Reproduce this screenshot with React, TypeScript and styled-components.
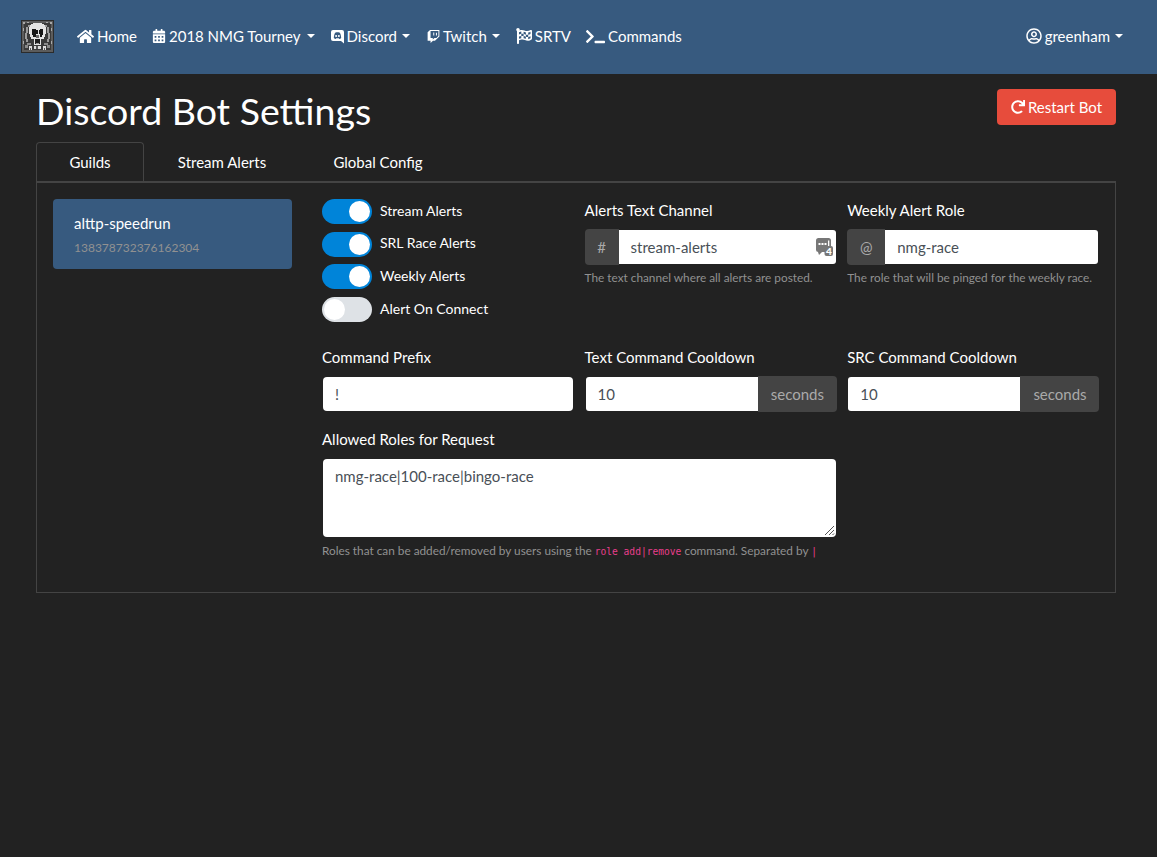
import styled, { createGlobalStyle } from "styled-components";
import {
  FaCalendarAlt,
  FaFlagCheckered,
  FaHome,
  FaRedo,
  FaRegUserCircle,
  FaTerminal,
  FaTwitch,
} from "react-icons/fa";

const GlobalStyle = createGlobalStyle`
  * { box-sizing: border-box; }
  html, body { margin: 0; background: #222; }
  body {
    font-family: Lato, "Liberation Sans", sans-serif;
    font-size: 15px;
    line-height: 1.5;
    color: #fff;
    min-height: 857px;
  }
`;

const Navbar = styled.nav`
  height: 74px;
  padding: 0 21px 2px;
  display: flex;
  align-items: center;
  background: #375a7f;
`;

const Brand = styled.div`
  width: 33px;
  height: 33px;
  margin-right: 23px;
  display: flex;
`;

const NavItem = styled.a<{ $gap?: number }>`
  display: flex;
  align-items: center;
  gap: 3px;
  margin-right: ${(p) => p.$gap ?? 16}px;
  color: #fff;
  white-space: nowrap;
  svg { flex: none; }
`;

const Caret = styled.span<{ $left?: number }>`
  width: 0;
  height: 0;
  margin-left: ${(p) => p.$left ?? 0}px;
  border-top: 4.5px solid #fff;
  border-left: 4.5px solid transparent;
  border-right: 4.5px solid transparent;
`;

const NavSpacer = styled.div`
  flex: 1;
`;

const Page = styled.main`
  padding: 0 41px 0 36px;
`;

const Header = styled.header`
  display: flex;
  justify-content: space-between;
  align-items: flex-start;
  height: 68px;
`;

const Title = styled.h1`
  margin: 13px 0 0;
  font-size: 37.5px;
  font-weight: 400;
  line-height: 48px;
`;

const RestartButton = styled.button`
  margin-top: 15px;
  width: 119px;
  height: 36px;
  display: flex;
  align-items: center;
  justify-content: center;
  gap: 3px;
  border: 0;
  border-radius: 4px;
  background: #e74c3c;
  color: #fff;
  font: inherit;
`;

const Tabs = styled.div`
  display: flex;
  height: 41px;
  border-bottom: 2px solid #444;
`;

const Tab = styled.div<{ $active?: boolean; $width: number }>`
  width: ${(p) => p.$width}px;
  height: 39px;
  display: flex;
  align-items: center;
  justify-content: center;
  border: 1px solid ${(p) => (p.$active ? "#444" : "transparent")};
  border-bottom: 0;
  border-radius: 4px 4px 0 0;
`;

const Panel = styled.section`
  height: 410px;
  padding: 16px;
  display: flex;
  gap: 30px;
  border: 1px solid #444;
  border-top: 0;
`;

const GuildCard = styled.div`
  width: 239px;
  height: 70px;
  flex: none;
  padding: 12px 21px;
  background: #375a7f;
  border-radius: 4px;
`;

const GuildName = styled.div`
  line-height: 24px;
`;

const GuildId = styled.div`
  margin-top: 2px;
  font-size: 12px;
  line-height: 22px;
  color: #919191;
`;

const Settings = styled.div`
  width: 778px;
  display: grid;
  grid-template-columns: repeat(3, 252.3px);
  grid-template-rows: 147px 82px auto;
  column-gap: 10.3px;
`;

const SwitchList = styled.div`
  display: flex;
  flex-direction: column;
  gap: 7.5px;
`;

const SwitchRow = styled.div`
  display: flex;
  align-items: center;
  gap: 8px;
  height: 25.2px;
  font-size: 14px;
`;

const SwitchLabel = styled.span`
  margin-top: -3px;
`;

const SwitchTrack = styled.span<{ $on?: boolean }>`
  width: 50px;
  height: 25px;
  padding: 2px;
  display: flex;
  justify-content: ${(p) => (p.$on ? "flex-end" : "flex-start")};
  border-radius: 13px;
  background: ${(p) => (p.$on ? "#0084d9" : "#dee2e6")};
`;

const SwitchKnob = styled.span`
  width: 21px;
  height: 21px;
  border-radius: 50%;
  background: #fff;
`;

const Field = styled.div<{ $span?: number }>`
  grid-column: span ${(p) => p.$span ?? 1};
`;

const Label = styled.label`
  display: block;
  height: 30px;
  line-height: 22px;
`;

const InputGroup = styled.div`
  display: flex;
  height: 36px;
  border-radius: 4px;
  overflow: hidden;
`;

const Addon = styled.span<{ $width: number }>`
  width: ${(p) => p.$width}px;
  flex: none;
  display: flex;
  align-items: center;
  justify-content: center;
  background: #444;
  color: #aaa;
`;

const InputBox = styled.div<{ $addonRight?: boolean }>`
  position: relative;
  flex: 1;
  min-width: 0;
  margin: ${(p) => (p.$addonRight ? "1px 0 1px 1px" : "1px 1px 1px 0")};
  padding: 0 12px;
  display: flex;
  align-items: center;
  background: #fff;
  color: #495057;
  border-radius: ${(p) => (p.$addonRight ? "3px 0 0 3px" : "0 3px 3px 0")};
`;

const SingleInput = styled.div`
  height: 34px;
  margin: 1px;
  padding: 0 12px;
  display: flex;
  align-items: center;
  background: #fff;
  color: #495057;
  border-radius: 4px;
`;

const ManagerIcon = styled.span`
  position: absolute;
  top: 8px;
  right: 3px;
  display: flex;
`;

const Help = styled.div`
  margin-top: 4px;
  font-size: 11.8px;
  line-height: 17px;
  color: #919191;
  white-space: nowrap;
`;

const TextArea = styled.div`
  position: relative;
  height: 78px;
  margin: 1px 1px 5px;
  padding: 5px 12px;
  background: #fff;
  border-radius: 4px;
  color: #495057;
  line-height: 24px;
`;

const Grip = styled.svg`
  position: absolute;
  right: 1px;
  bottom: 1px;
`;

const Code = styled.code`
  font-family: "DejaVu Sans Mono", "Liberation Mono", monospace;
  font-size: 9.6px;
  color: #e83e8c;
`;

function SkullLogo() {
  return (
    <svg width="33" height="33" viewBox="0 0 32 32" shapeRendering="crispEdges">
      <rect width="32" height="32" fill="#2b2b2b" />
      <rect x="1" y="1" width="30" height="30" fill="#5c5c5c" />
      <rect x="3" y="3" width="26" height="26" fill="#3a3a3a" />
      {/* web and legs */}
      <path d="M2 2h2v2H2zM6 2h2v1H6zM24 2h2v1h-2zM28 2h2v2h-2zM2 8h1v3H2zM29 8h1v3h-1zM2 20h1v3H2zM29 20h1v3h-1z" fill="#a8a8a8" />
      <path d="M7 5h2v2H7zM5 7h2v6H5zM4 13h2v5H4zM5 18h2v3H5zM23 5h2v2h-2zM25 7h2v6h-2zM26 13h2v5h-2zM25 18h2v3h-2z" fill="#9c9c9c" />
      <path d="M6 22h4v2H6zM4 24h3v3H4zM22 22h4v2h-4zM25 24h3v3h-3z" fill="#8a8a8a" />
      {/* skull */}
      <path d="M12 3h8v1h2v1h1v2h1v7h-1v2h-1v2h-3v6h-6v-6H10v-2H9v-2H8V7h1V5h1V4h2z" fill="#e4e4e4" />
      <path d="M11 9h4v1h1v4h-1v2h-3v-1h-1zM17 10h1V9h3v6h-1v1h-2v-2h-1z" fill="#161616" />
      <path d="M15 15h2v2h-2z" fill="#6a6a6a" />
      <path d="M14 18h4v5h-4z" fill="#1d1d1d" />
      <path d="M15 22h2v1h-2z" fill="#999" />
      {/* teeth */}
      <path d="M8 25h3v4H8zM21 25h3v4h-3zM13 25h6v3h-6z" fill="#dcdcdc" />
      <path d="M15 25h1v3h-1zM9 27h1v2H9zM22 27h1v2h-1z" fill="#555" />
    </svg>
  );
}

function DiscordIcon() {
  return (
    <svg width="13" height="15" viewBox="0 0 13 15">
      <path d="M2 1h9a2 2 0 0 1 2 2v11.500l-3-2.500H2a2 2 0 0 1-2-2V3a2 2 0 0 1 2-2z" fill="#fff" />
      <path d="M4.500 3.500c1.300-.4 2.700-.4 4 0 .9.500 1.600 3 1.700 5.500-.6.600-1.300.900-2 1l-.5-.8H5.300l-.5.800c-.7-.1-1.400-.4-2-1 .1-2.500.8-5 1.700-5.500z" fill="#375a7f" />
      <circle cx="5.100" cy="6.900" r="1" fill="#fff" />
      <circle cx="7.900" cy="6.900" r="1" fill="#fff" />
    </svg>
  );
}

function PasswordManagerIcon() {
  return (
    <svg width="17" height="18" viewBox="0 0 17 18">
      <rect x="0" y="0" width="15" height="14" rx="2.500" fill="#777" />
      <path d="M2 14h4l-3 3z" fill="#777" />
      <path d="M2.500 5h2v2h-2zM5.500 5h2v2h-2zM8.500 5h2v2h-2z" fill="#fff" />
      <rect x="12" y="2.500" width="1.300" height="6" fill="#fff" />
      <rect x="8.500" y="8" width="8.500" height="10" rx="2" fill="#777" />
      <text x="12.800" y="16.800" textAnchor="middle" fontFamily="Lato, sans-serif" fontSize="10" fontWeight="900" fill="#fff">
        4
      </text>
    </svg>
  );
}

export default function App() {
  const switches = [
    { label: "Stream Alerts", on: true },
    { label: "SRL Race Alerts", on: true },
    { label: "Weekly Alerts", on: true },
    { label: "Alert On Connect", on: false },
  ];

  return (
    <>
      <GlobalStyle />
      <Navbar>
        <Brand>
          <SkullLogo />
        </Brand>
        <NavItem $gap={15}>
          <FaHome size={17} />
          Home
        </NavItem>
        <NavItem>
          <FaCalendarAlt size={14} />
          2018 NMG Tourney
          <Caret $left={3} />
        </NavItem>
        <NavItem $gap={17}>
          <DiscordIcon />
          Discord
          <Caret $left={2} />
        </NavItem>
        <NavItem>
          <FaTwitch size={13} />
          Twitch
          <Caret $left={2} />
        </NavItem>
        <NavItem $gap={15}>
          <FaFlagCheckered size={16} />
          SRTV
        </NavItem>
        <NavItem>
          <FaTerminal size={19} />
          Commands
        </NavItem>
        <NavSpacer />
        <NavItem $gap={13}>
          <FaRegUserCircle size={16} />
          greenham
          <Caret $left={2} />
        </NavItem>
      </Navbar>
      <Page>
        <Header>
          <Title>Discord Bot Settings</Title>
          <RestartButton>
            <FaRedo size={14} />
            Restart Bot
          </RestartButton>
        </Header>
        <Tabs>
          <Tab $active $width={108}>
            Guilds
          </Tab>
          <Tab $width={156}>Stream Alerts</Tab>
          <Tab $width={156}>Global Config</Tab>
        </Tabs>
        <Panel>
          <GuildCard>
            <GuildName>alttp-speedrun</GuildName>
            <GuildId>138378732376162304</GuildId>
          </GuildCard>
          <Settings>
            <SwitchList>
              {switches.map((s) => (
                <SwitchRow key={s.label}>
                  <SwitchTrack $on={s.on}>
                    <SwitchKnob />
                  </SwitchTrack>
                  <SwitchLabel>{s.label}</SwitchLabel>
                </SwitchRow>
              ))}
            </SwitchList>
            <Field>
              <Label>Alerts Text Channel</Label>
              <InputGroup>
                <Addon $width={34}>#</Addon>
                <InputBox>
                  stream-alerts
                  <ManagerIcon>
                    <PasswordManagerIcon />
                  </ManagerIcon>
                </InputBox>
              </InputGroup>
              <Help>The text channel where all alerts are posted.</Help>
            </Field>
            <Field>
              <Label>Weekly Alert Role</Label>
              <InputGroup>
                <Addon $width={38}>@</Addon>
                <InputBox>nmg-race</InputBox>
              </InputGroup>
              <Help>The role that will be pinged for the weekly race.</Help>
            </Field>
            <Field>
              <Label>Command Prefix</Label>
              <SingleInput>!</SingleInput>
            </Field>
            <Field>
              <Label>Text Command Cooldown</Label>
              <InputGroup>
                <InputBox $addonRight>10</InputBox>
                <Addon $width={79}>seconds</Addon>
              </InputGroup>
            </Field>
            <Field>
              <Label>SRC Command Cooldown</Label>
              <InputGroup>
                <InputBox $addonRight>10</InputBox>
                <Addon $width={79}>seconds</Addon>
              </InputGroup>
            </Field>
            <Field $span={2}>
              <Label>Allowed Roles for Request</Label>
              <TextArea>
                nmg-race|100-race|bingo-race
                <Grip width="12" height="12" viewBox="0 0 12 12">
                  <path d="M2 11l9-9M6 11l5-5M9.500 11l1.500-1.500" stroke="#555" strokeWidth="1" fill="none" />
                </Grip>
              </TextArea>
              <Help>
                Roles that can be added/removed by users using the <Code>role add|remove</Code> command. Separated by{" "}
                <Code>|</Code>
              </Help>
            </Field>
          </Settings>
        </Panel>
      </Page>
    </>
  );
}
